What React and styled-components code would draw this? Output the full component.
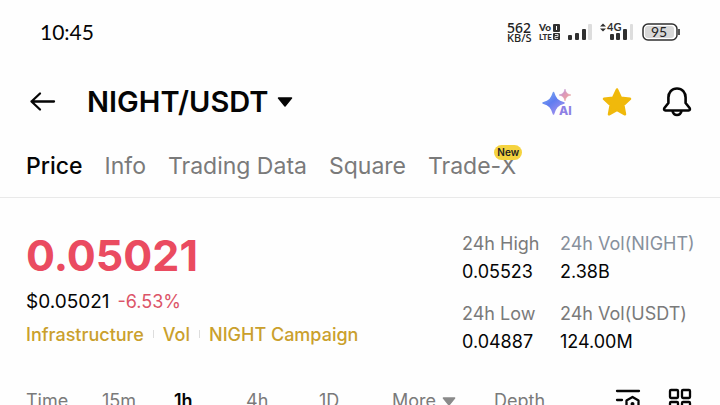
import styled, { createGlobalStyle } from "styled-components"

const GlobalStyle = createGlobalStyle`

    * {
        box-sizing: border-box;
    }

    body {
        margin: 0;
        background-color: #fefefe;
        color: #050505;
        font-family: Inter, 'Liberation Sans', sans-serif;
        overflow-x: hidden;
    }

    button {
        padding: 0;
        border: none;
        background: none;
        color: inherit;
        font: inherit;
        cursor: pointer;
    }

    svg {
        flex-shrink: 0;
        overflow: visible;
    }

`

const StatusBar = styled.div`

    display: flex;
    justify-content: space-between;
    align-items: center;
    height: 64px;
    padding: 0 40px;

`

const Clock = styled.time`

    font-family: Lato, sans-serif;
    font-size: 21px;
    line-height: 24px;

`

const StatusIcons = styled.div`

    display: flex;
    align-items: center;
    gap: 8px;

`

const Speed = styled.div`

    width: 24px;
    color: #222222;
    font-family: 'Noto Sans', sans-serif;
    font-size: 11px;
    font-weight: 500;
    line-height: 9px;
    text-align: center;
    div:first-child {
        font-size: 14px;
        line-height: 10px;
    }

`

const Header = styled.header`

    display: flex;
    align-items: center;
    height: 76px;
    padding: 0 27px 0 28px;

`

const Pair = styled.button`

    display: flex;
    align-items: center;
    gap: 9px;
    margin-left: 31px;
    h1 {
        margin: 0;
        font-size: 29px;
        font-weight: 600;
        line-height: 36px;
    }

`

const Actions = styled.div`

    display: flex;
    align-items: center;
    gap: 28px;
    margin-left: auto;

`

const IconButton = styled.button`

    display: flex;

`

const Tabs = styled.nav`

    display: flex;
    gap: 22px;
    height: 58px;
    padding: 0 26px;
    border-bottom: 1px solid #e9e9e9;

`

const Tab = styled.a`

    position: relative;
    padding-top: 10px;
    color: ${props => props.$active ? '#050505' : '#7a7a7a'};
    font-size: 23px;
    font-weight: ${props => props.$active ? 500 : 400};
    line-height: 32px;
    text-decoration: none;
    white-space: nowrap;
    ::after {
        content: '';
        display: ${props => props.$active ? 'block' : 'none'};
        width: 25px;
        height: 5px;
        margin: 10px auto 0;
        background-color: #f5d245;
    }

`

const Badge = styled.span`

    position: absolute;
    top: 5px;
    right: -6px;
    padding: 0 3px;
    border-radius: 8px;
    background-color: #f5d33f;
    color: #222222;
    font-size: 10px;
    font-weight: 600;
    line-height: 15px;

`

const Summary = styled.section`

    display: flex;
    justify-content: space-between;
    padding: 34px 26px 35px;

`

const Price = styled.div`

    color: #ea4b60;
    font-size: 43px;
    font-weight: 700;
    line-height: 46px;

`

const Fiat = styled.div`

    display: flex;
    align-items: baseline;
    gap: 8px;
    margin-top: 12px;
    font-size: 19px;
    line-height: 24px;

`

const Change = styled.span`

    color: #dc5468;
    font-size: 18px;

`

const Tags = styled.div`

    display: flex;
    align-items: center;
    margin-top: 10px;

`

const Tag = styled.a`

    color: #caa02c;
    font-size: 18px;
    font-weight: 500;
    line-height: 22px;
    text-decoration: none;
    & + &::before {
        content: '';
        display: inline-block;
        width: 1px;
        height: 8px;
        margin: 0 9px 3px 9px;
        background-color: #dddddd;
    }

`

const Stats = styled.dl`

    display: grid;
    grid-template-columns: 78px 134px;
    gap: 18px 20px;
    margin: 0;

`

const Stat = styled.div`

    font-size: 18px;
    white-space: nowrap;
    dt {
        color: ${props => props.$tint || '#7a7a7a'};
        line-height: 24px;
    }
    dd {
        margin: 4px 0 0;
        line-height: 24px;
    }

`

const Intervals = styled.div`

    display: grid;
    grid-template-columns: 76fr 72fr 72fr 73fr 73fr 102fr 121fr 54fr 25fr;
    align-items: center;
    padding: 0 26px;

`

const Interval = styled.button`

    display: flex;
    align-items: center;
    gap: 6px;
    color: ${props => props.$active ? '#050505' : '#7a7a7a'};
    font-size: 18px;
    font-weight: ${props => props.$active ? 600 : 400};
    line-height: 24px;

`

const stats = [
    { label: '24h High', value: '0.05523' },
    { label: '24h Vol(NIGHT)', value: '2.38B', tint: '#87909c' },
    { label: '24h Low', value: '0.04887' },
    { label: '24h Vol(USDT)', value: '124.00M' },
]

const Volte = () => (
    <svg width="21" height="18" viewBox="0 0 21 18" fontFamily="Lato" fontWeight="900" fill="#303030">
        <text x="0" y="8" fontSize="10">Vo</text>
        <text x="0" y="17" fontSize="8">LTE</text>
        <rect x="14" y="1" width="7" height="8" rx="1" />
        <path d="M17.5 3v4" stroke="#fff" />
        <rect x="14" y="10" width="7" height="7" rx="1" />
        <path d="M16 11.500h3v2h-3v2h3" fill="none" stroke="#fff" strokeWidth=".8" />
    </svg>
)

const Signal = () => (
    <svg width="24" height="18" viewBox="0 0 24 18" fill="#303030">
        <rect x="0" y="12" width="4" height="5" rx="1" />
        <rect x="7" y="10" width="4" height="7" rx="1" />
        <rect x="14" y="6" width="4" height="11" rx="1" />
        <rect x="20" y="1" width="4" height="16" rx="1" fill="#dddddd" />
    </svg>
)

const Signal4G = () => (
    <svg width="34" height="18" viewBox="0 0 34 18" fill="#303030">
        <path d="M0 3.500l3-3 3 3zM0 5.500l3 3 3-3z" />
        <text x="7" y="8" fontFamily="Lato" fontSize="11" fontWeight="700">4G</text>
        <rect x="10" y="11" width="4" height="6" rx="1" />
        <rect x="16" y="10" width="4" height="7" rx="1" />
        <rect x="23" y="6" width="4" height="11" rx="1" />
        <rect x="30" y="1" width="3" height="16" rx="1" fill="#dddddd" />
    </svg>
)

const Battery = () => (
    <svg width="38" height="18" viewBox="0 0 38 18">
        <rect x="1" y="1" width="34" height="16" rx="5" fill="#fff" stroke="#303030" strokeWidth="1.500" />
        <rect x="3" y="3" width="29" height="12" rx="3" fill="#d8d8d8" />
        <path d="M37 6v6" stroke="#555" strokeWidth="2" />
        <text x="17" y="14" textAnchor="middle" fontFamily="Lato" fontSize="14" fill="#222">95</text>
    </svg>
)

const BackIcon = () => (
    <svg width="28" height="22" viewBox="0 0 28 22" fill="none" stroke="#050505" strokeWidth="2.300" strokeLinecap="round" strokeLinejoin="round">
        <path d="M26 10.500H3.500M12 2.500L3.500 10.500l8.500 8" />
    </svg>
)

const Caret = ({ width, height, color }) => (
    <svg width={width} height={height} viewBox="0 0 16 10">
        <path d="M1.500 1h13L8 9z" fill={color} stroke={color} strokeWidth="1.500" strokeLinejoin="round" />
    </svg>
)

const AiIcon = () => (
    <svg width="32" height="30" viewBox="0 0 32 30">
        <defs>
            <linearGradient id="spark" x1="0" y1="0" x2="0.700" y2="1">
                <stop offset="0" stopColor="#7db0f0" />
                <stop offset="0.500" stopColor="#5f7df0" />
                <stop offset="1" stopColor="#9f8fee" />
            </linearGradient>
            <linearGradient id="small" x1="0" y1="0" x2="1" y2="1">
                <stop offset="0" stopColor="#a58be8" />
                <stop offset="0.500" stopColor="#e29bb4" />
                <stop offset="1" stopColor="#e8a890" />
            </linearGradient>
        </defs>
        <path d="M12.500 5.500C14.500 12 16.500 14 23 16 16.500 18 14.500 20 12.500 27 10.500 20 8.500 18 2 16 8.500 14 10.500 12 12.500 5.500z" fill="url(#spark)" stroke="url(#spark)" strokeWidth="1.500" strokeLinejoin="round" />
        <path d="M24 2c1 3.800 2.200 5 6 6-3.800 1-5 2.200-6 6-1-3.800-2.200-5-6-6 3.800-1 5-2.200 6-6z" fill="url(#small)" stroke="url(#small)" strokeWidth=".5" />
        <text x="18" y="28" fontFamily="Inter" fontSize="12" fontWeight="800" fill="#8d80e4" stroke="#fefefe" strokeWidth="2" paintOrder="stroke">AI</text>
    </svg>
)

const StarIcon = () => (
    <svg width="32" height="32" viewBox="0 0 32 32">
        <path d="M16 3.500l3.900 8.200 9.100 1.100-6.700 6.200 1.700 9.300-8-4.500-8 4.500 1.700-9.300L3 12.800l9.100-1.100z" fill="#f0b90b" stroke="#f0b90b" strokeWidth="2.500" strokeLinejoin="round" />
    </svg>
)

const BellIcon = () => (
    <svg width="32" height="32" viewBox="0 0 32 32" fill="none" stroke="#050505" strokeWidth="2.600" strokeLinejoin="round">
        <path d="M16 2.500c-5.300 0-8.600 3.900-8.600 9v5.500l-4 5c-.7 1.500-.2 2.500 1 2.500h23.200c1.200 0 1.700-1 1-2.500l-4-5v-5.500c0-5.100-3.300-9-8.600-9z" />
        <path d="M11.500 25c.6 2.700 2.200 4 4.500 4s3.900-1.300 4.500-4" />
    </svg>
)

const SettingsIcon = () => (
    <svg width="26" height="24" viewBox="0 0 26 24" fill="none" stroke="#050505" strokeWidth="2.300" strokeLinecap="round">
        <path d="M2 2h22M2 11h5M2 20h5" />
        <path d="M17.500 8l6 3.500v7l-6 3.500-6-3.500v-7z" strokeLinejoin="round" />
        <circle cx="17.500" cy="15" r="2" fill="#050505" stroke="none" />
    </svg>
)

const GridIcon = () => (
    <svg width="24" height="24" viewBox="0 0 24 24" fill="none" stroke="#050505" strokeWidth="2.300">
        <rect x="1" y="1" width="8" height="8" rx="1" />
        <rect x="13" y="1" width="8" height="8" rx="1" />
        <rect x="1" y="13" width="8" height="8" rx="1" />
        <rect x="13" y="13" width="8" height="8" rx="1" />
    </svg>
)

const App = () => {
  return (
    <main>
        <GlobalStyle />
        <StatusBar>
            <Clock>10:45</Clock>
            <StatusIcons>
                <Speed>
                    <div>562</div>
                    <div>KB/S</div>
                </Speed>
                <Volte />
                <Signal />
                <Signal4G />
                <Battery />
            </StatusIcons>
        </StatusBar>
        <Header>
            <IconButton aria-label="Back"><BackIcon /></IconButton>
            <Pair>
                <h1>NIGHT/USDT</h1>
                <Caret width={16} height={10} color="#050505" />
            </Pair>
            <Actions>
                <IconButton aria-label="AI"><AiIcon /></IconButton>
                <IconButton aria-label="Favorite"><StarIcon /></IconButton>
                <IconButton aria-label="Alerts"><BellIcon /></IconButton>
            </Actions>
        </Header>
        <Tabs>
            <Tab href="#price" $active>Price</Tab>
            <Tab href="#info">Info</Tab>
            <Tab href="#data">Trading Data</Tab>
            <Tab href="#square">Square</Tab>
            <Tab href="#trade-x">Trade-X<Badge>New</Badge></Tab>
        </Tabs>
        <Summary>
            <div>
                <Price>0.05021</Price>
                <Fiat>
                    <span>$0.05021</span>
                    <Change>-6.53%</Change>
                </Fiat>
                <Tags>
                    <Tag href="#infrastructure">Infrastructure</Tag>
                    <Tag href="#vol">Vol</Tag>
                    <Tag href="#campaign">NIGHT Campaign</Tag>
                </Tags>
            </div>
            <Stats>
                {stats.map(({ label, value, tint }) => (
                    <Stat key={label} $tint={tint}>
                        <dt>{label}</dt>
                        <dd>{value}</dd>
                    </Stat>
                ))}
            </Stats>
        </Summary>
        <Intervals>
            <Interval>Time</Interval>
            <Interval>15m</Interval>
            <Interval $active>1h</Interval>
            <Interval>4h</Interval>
            <Interval>1D</Interval>
            <Interval>More <Caret width={14} height={9} color="#8a8a8a" /></Interval>
            <Interval>Depth</Interval>
            <IconButton aria-label="Chart settings"><SettingsIcon /></IconButton>
            <IconButton aria-label="Layout"><GridIcon /></IconButton>
        </Intervals>
    </main>
  )
}

export default App
